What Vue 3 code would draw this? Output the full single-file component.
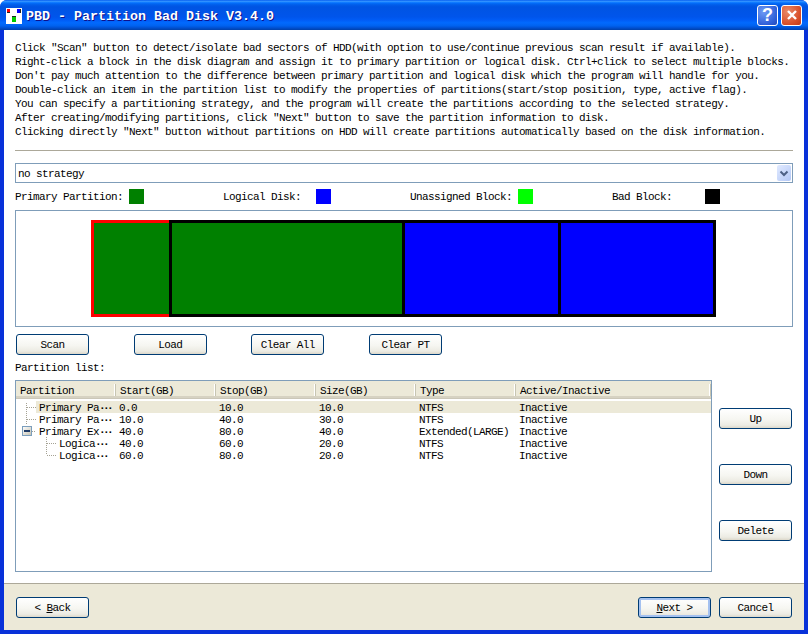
<script setup>
const lines = [
  'Click "Scan" button to detect/isolate bad sectors of HDD(with option to use/continue previous scan result if available).',
  'Right-click a block in the disk diagram and assign it to primary partition or logical disk. Ctrl+click to select multiple blocks.',
  "Don't pay much attention to the difference between primary partition and logical disk which the program will handle for you.",
  'Double-click an item in the partition list to modify the properties of partitions(start/stop position, type, active flag).',
  'You can specify a partitioning strategy, and the program will create the partitions according to the selected strategy.',
  'After creating/modifying partitions, click "Next" button to save the partition information to disk.',
  'Clicking directly "Next" button without partitions on HDD will create partitions automatically based on the disk information.'
]
const legend = [
  { key: 'primary', label: 'Primary Partition:' },
  { key: 'logical', label: 'Logical Disk:' },
  { key: 'free', label: 'Unassigned Block:' },
  { key: 'bad', label: 'Bad Block:' }
]
const blocks = [
  { cls: 'green first', w: 81 },
  { cls: 'green', w: 236 },
  { cls: 'blue', w: 159 },
  { cls: 'blue', w: 158 }
]
const headers = ['Partition', 'Start(GB)', 'Stop(GB)', 'Size(GB)', 'Type', 'Active/Inactive']
const rows = [
  { level: 0, name: 'Primary Pa', v: ['0.0', '10.0', '10.0', 'NTFS', 'Inactive'], sel: true, tree: 'first' },
  { level: 0, name: 'Primary Pa', v: ['10.0', '40.0', '30.0', 'NTFS', 'Inactive'], tree: 'mid' },
  { level: 0, name: 'Primary Ex', v: ['40.0', '80.0', '40.0', 'Extended(LARGE)', 'Inactive'], tree: 'exp' },
  { level: 1, name: 'Logica', v: ['40.0', '60.0', '20.0', 'NTFS', 'Inactive'], tree: 'c1' },
  { level: 1, name: 'Logica', v: ['60.0', '80.0', '20.0', 'NTFS', 'Inactive'], tree: 'c2' }
]
</script>

<template>
  <div class="window">
    <header class="titlebar">
      <svg class="appicon" width="16" height="16" viewBox="0 0 16 16">
        <rect width="16" height="16" fill="#fff" />
        <rect x="1" y="1" width="3" height="4" fill="#f00" />
        <rect x="1" y="4" width="3" height="1" fill="#222" />
        <rect x="11" y="1" width="4" height="4" fill="#00f" />
        <rect x="14" y="1" width="1" height="4" fill="#222" />
        <rect x="6" y="9" width="4" height="5" fill="#0c0" />
        <rect x="6" y="8" width="4" height="1" fill="#222" />
      </svg>
      <span class="title">PBD - Partition Bad Disk V3.4.0</span>
      <div class="capbtn help">?</div>
      <div class="capbtn close">
        <svg width="20" height="20" viewBox="0 0 20 20">
          <path d="M6 6 L14 14 M14 6 L6 14" stroke="#fff" stroke-width="2.4" />
        </svg>
      </div>
    </header>

    <div class="client">
      <main class="main">
        <div class="intro">
          <div v-for="l in lines" :key="l" class="line">{{ l }}</div>
        </div>
        <div class="sep"></div>

        <div class="combo">
          <span class="combo-text">no strategy</span>
          <div class="arrow">
            <svg width="14" height="16" viewBox="0 0 14 16">
              <path d="M3.5 6.5 L7 10 L10.5 6.5" fill="none" stroke="#4d6185" stroke-width="2" />
            </svg>
          </div>
        </div>

        <div class="legend">
          <div v-for="i in legend" :key="i.key" :class="['legend-item', i.key]">
            <span class="legend-label">{{ i.label }}</span>
            <span class="swatch"></span>
          </div>
        </div>

        <div class="diagram">
          <div
            v-for="(b, idx) in blocks"
            :key="idx"
            :class="['block', b.cls]"
            :style="{ width: b.w + 'px' }"
          ></div>
        </div>

        <div class="actions">
          <button class="btn">Scan</button>
          <button class="btn">Load</button>
          <button class="btn">Clear All</button>
          <button class="btn">Clear PT</button>
        </div>

        <div class="list-label">Partition list:</div>

        <div class="list-area">
          <div class="list">
            <div class="list-head">
              <div v-for="h in headers" :key="h" class="hcell">{{ h }}</div>
            </div>
            <div class="list-body">
              <div v-for="(r, idx) in rows" :key="idx" class="row">
                <svg class="tree" :width="r.level ? 40 : 20" height="12" shape-rendering="crispEdges">
                  <g fill="none" stroke="#a5a294" stroke-dasharray="1 1">
                    <path v-if="r.tree === 'first'" d="M10.5 2V12M11 6.5H20" />
                    <path v-if="r.tree === 'mid'" d="M10.5 0V12M11 6.5H20" />
                    <path v-if="r.tree === 'exp'" d="M16 6.5H20" />
                    <path v-if="r.tree === 'c1'" d="M30.5 0V12M31 6.5H40" />
                    <path v-if="r.tree === 'c2'" d="M30.5 0V6M31 6.5H40" />
                  </g>
                  <template v-if="r.tree === 'exp'">
                    <defs>
                      <linearGradient id="expg" x1="0" y1="0" x2="1" y2="1">
                        <stop offset="0" stop-color="#fff" />
                        <stop offset="1" stop-color="#c4c1b0" />
                      </linearGradient>
                    </defs>
                    <rect x="6.5" y="1.5" width="9" height="9" fill="url(#expg)" stroke="#7b9ebd" />
                    <rect x="8" y="5" width="6" height="2" fill="#1f3b66" />
                  </template>
                </svg>
                <div :class="['row-main', { sel: r.sel }]">
                  <div :class="['name', r.level ? 'name-child' : '']">{{ r.name }}<span class="dots">···</span></div>
                  <div v-for="(c, j) in r.v" :key="j" class="cell">{{ c }}</div>
                </div>
              </div>
            </div>
          </div>
          <div class="side">
            <button class="btn">Up</button>
            <button class="btn">Down</button>
            <button class="btn">Delete</button>
          </div>
        </div>
      </main>

      <footer class="footer">
        <button class="btn">&lt; <u>B</u>ack</button>
        <div class="footer-right">
          <button class="btn default"><u>N</u>ext &gt;</button>
          <button class="btn">Cancel</button>
        </div>
      </footer>
    </div>
  </div>
</template>

<style scoped>
.window {
  width: 808px;
  height: 634px;
  box-sizing: border-box;
  display: flex;
  flex-direction: column;
  background: #0831d9;
  border-radius: 7px 7px 0 0;
  overflow: hidden;
  font-family: "Liberation Mono", monospace;
  font-size: 11px;
  letter-spacing: -0.6px;
  color: #000;
}
.titlebar {
  height: 30px;
  flex: none;
  display: flex;
  align-items: center;
  box-sizing: border-box;
  padding: 0 6px 0 6px;
  background: linear-gradient(180deg, #0058ee 0%, #3593ff 4%, #288eff 6%, #127dff 8%, #036ffc 10%, #0262ee 14%, #0057e5 20%, #0054e3 24%, #0055eb 56%, #005bf5 66%, #026afe 76%, #0062ef 86%, #0052d6 92%, #0040ab 100%);
}
.appicon { flex: none; margin-top: 2px; }
.title {
  margin-left: 4px;
  margin-top: 3px;
  flex: 1;
  font-size: 13.33px;
  letter-spacing: 0;
  font-weight: 700;
  color: #fff;
  text-shadow: 1px 1px 0 #0f1089;
  white-space: pre;
}
.capbtn {
  width: 21px;
  height: 21px;
  box-sizing: border-box;
  border: 1px solid #fff;
  border-radius: 3px;
  flex: none;
  display: flex;
  align-items: center;
  justify-content: center;
  color: #fff;
  overflow: hidden;
}
.capbtn svg { flex: none; }
.help {
  margin-left: 3px;
  margin-right: 3px;
  background: radial-gradient(circle at 30% 30%, #6f9bf5, #2f5fd8 70%, #2349b8);
  font-family: "Liberation Sans", sans-serif;
  font-weight: 700;
  font-size: 18px;
  letter-spacing: 0;
}
.close {
  background: radial-gradient(circle at 30% 30%, #ea8a68, #d9502a 65%, #c13a17);
}
.client {
  flex: 1;
  min-height: 0;
  margin: 0 4px 4px;
  display: flex;
  flex-direction: column;
  background: #fff;
}
.main {
  flex: 1;
  min-height: 0;
  padding: 10px 11px 0;
  display: flex;
  flex-direction: column;
}
.intro { height: 98px; flex: none; }
.line {
  height: 14px;
  line-height: 16px;
  white-space: pre;
}
.sep {
  flex: none;
  height: 1px;
  margin-top: 12px;
  background: #aca899;
}
.combo {
  flex: none;
  height: 20px;
  margin-top: 12px;
  box-sizing: border-box;
  border: 1px solid #7f9db9;
  display: flex;
  align-items: center;
  justify-content: space-between;
  padding: 0 1px 0 2px;
}
.combo-text { padding-top: 2px; }
.arrow {
  width: 14px;
  height: 16px;
  border-radius: 2px;
  background: linear-gradient(135deg, #e1eaff, #b4c8f6);
}
.arrow svg { display: block; }
.legend {
  flex: none;
  height: 15px;
  margin-top: 6px;
  display: grid;
  grid-template-columns: 208px 187px 202px 1fr;
}
.legend-item { display: flex; align-items: center; }
.legend-label { white-space: pre; }
.primary .legend-label { width: 114px; }
.logical .legend-label { width: 93px; }
.free .legend-label { width: 108px; }
.bad .legend-label { width: 93px; }
.swatch { width: 15px; height: 15px; flex: none; }
.primary .swatch { background: #008000; }
.logical .swatch { background: #0000ff; }
.free .swatch { background: #00ff00; }
.bad .swatch { background: #000; }
.diagram {
  flex: none;
  height: 117px;
  margin-top: 6px;
  box-sizing: border-box;
  border: 1px solid #7f9db9;
  padding: 9px 0 0 75px;
  display: flex;
  align-items: flex-start;
}
.block {
  height: 97px;
  box-sizing: border-box;
  border: 3px solid #000;
  margin-right: -3px;
  flex: none;
  position: relative;
}
.green { background: #008000; }
.blue { background: #0000ff; }
.first { border-color: #f00; }
.block:not(.first) { z-index: 1; }
.btn {
  width: 73px;
  height: 21px;
  box-sizing: border-box;
  padding: 0;
  border: 1px solid #003c74;
  border-radius: 3px;
  background: linear-gradient(180deg, #fff 0%, #f6f6f1 55%, #ecebe3 85%, #dcd8ca 100%);
  font-family: inherit;
  font-size: inherit;
  letter-spacing: inherit;
  color: #000;
  white-space: pre;
  flex: none;
}
.btn.default {
  box-shadow: inset 0 0 0 2px #a4c1f0;
}
.actions {
  flex: none;
  margin-top: 7px;
  margin-left: 1px;
  display: flex;
  gap: 44.67px;
}
.list-label {
  flex: none;
  margin-top: 6px;
  height: 14px;
  line-height: 14px;
}
.list-area {
  flex: none;
  margin-top: 5px;
  display: flex;
  gap: 7px;
}
.list {
  width: 697px;
  height: 192px;
  box-sizing: border-box;
  border: 1px solid #7f9db9;
  flex: none;
}
.list-head {
  display: flex;
  background: #ece9d8;
  box-shadow: inset 0 -3px 0 -1px #d6d2c2;
  border-bottom: 1px solid #cbc7b8;
  box-sizing: content-box;
  height: 17px;
}
.hcell {
  width: 100px;
  box-sizing: border-box;
  padding-left: 4px;
  line-height: 20px;
  white-space: pre;
  position: relative;
}
.hcell:last-child { width: 195px; }
.hcell::after {
  content: "";
  position: absolute;
  right: 0;
  top: 3px;
  height: 12px;
  width: 1px;
  background: #c7c5b2;
  box-shadow: -1px 0 0 #fff;
}
.list-body { padding-top: 2px; }
.row {
  height: 12px;
  display: flex;
}
.tree { flex: none; display: block; }
.row-main {
  flex: 1;
  display: flex;
  height: 12px;
  line-height: 14px;
  white-space: pre;
}
.row-main.sel { background: #ece9d8; }
.name { width: 79px; padding-left: 3px; box-sizing: border-box; flex: none; }
.name-child { width: 59px; }
.dots { font-weight: 700; letter-spacing: -2.6px; }
.cell { width: 100px; padding-left: 4px; box-sizing: border-box; flex: none; }
.side {
  width: 73px;
  flex: none;
  padding-top: 28px;
  display: flex;
  flex-direction: column;
  gap: 35px;
}
.footer {
  flex: none;
  height: 47px;
  box-sizing: border-box;
  border-top: 1px solid #aca899;
  background: #ece9d8;
  padding: 13px 12px 0;
  display: flex;
  justify-content: space-between;
  align-items: flex-start;
}
.footer-right { display: flex; gap: 8px; }
</style>

<style>
html, body { margin: 0; background: #fff; }
</style>
